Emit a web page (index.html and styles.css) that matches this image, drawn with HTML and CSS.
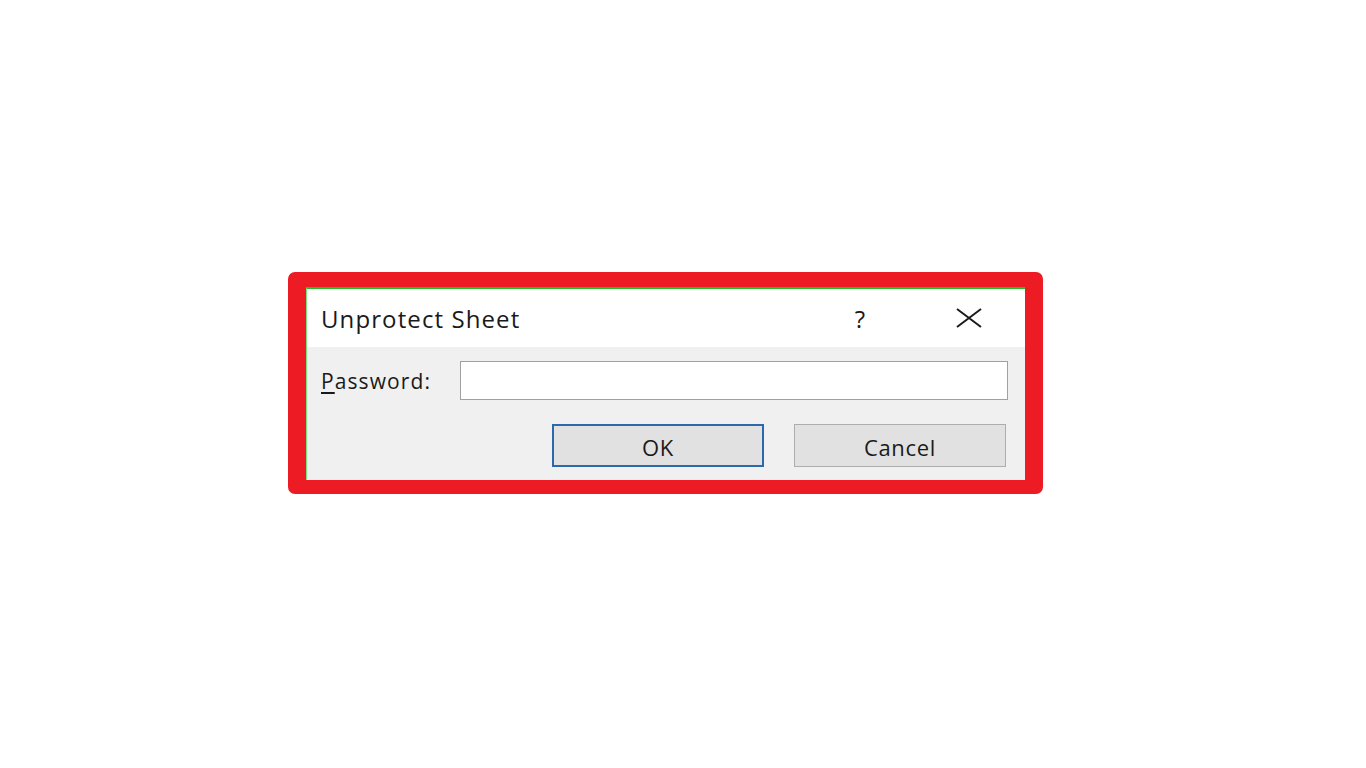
FILE: index.html
```html
<!DOCTYPE html>
<html lang="en">
<head>
  <meta charset="UTF-8" />
  <title>Unprotect Sheet</title>
  <link rel="stylesheet" href="styles.css">
</head>
<body>
  <div class="frame">
    <div class="dialog">
      <div class="title-bar">
        <span class="title">Unprotect Sheet</span>
        <span class="help">?</span>
        <span class="close">
          <svg width="26" height="20" viewBox="0 0 26 20" preserveAspectRatio="none">
            <path d="M1 1 L25 19 M25 1 L1 19" stroke="#1a1a1a" stroke-width="2" fill="none" />
          </svg>
        </span>
      </div>

      <div class="content">
        <div class="field-row">
          <label class="label" for="password"><u>P</u>assword:</label>
          <input class="input" type="password" id="password" />
        </div>
        <div class="button-row">
          <button class="btn btn-default">OK</button>
          <button class="btn">Cancel</button>
        </div>
      </div>
    </div>
  </div>
</body>
</html>
```

FILE: styles.css
```css
:root {
  --red: #ed1c24;
  --green: #22c02a;
  --panel: #f0f0f0;
  --text: #1a1a1a;
  --btn: #e1e1e1;
}

body {
  margin: 0;
  background: #ffffff;
  font-family: "Open Sans", "Noto Sans", sans-serif;
  color: var(--text);
}

.frame {
  width: 755px;
  margin: 272px 0 0 288px;
  box-sizing: border-box;
  border-style: solid;
  border-color: var(--red);
  border-width: 15px 18px 14px 18px;
  border-radius: 7px;
  background: var(--panel);
}

.dialog {
  border-top: 2px solid var(--green);
  border-left: 1px solid #7be07f;
}

.title-bar {
  display: flex;
  align-items: center;
  height: 58px;
  padding-left: 14px;
  background: #ffffff;
}

.title {
  flex: 1;
  font-size: 24px;
  letter-spacing: 1.1px;
}

.help {
  width: 40px;
  text-align: center;
  font-size: 24px;
  margin-right: 62px;
}

.close {
  display: flex;
  justify-content: center;
  width: 54px;
  margin-right: 29px;
}

.content {
  padding: 14px 17px 13px 14px;
}

.field-row {
  display: flex;
  align-items: center;
  height: 39px;
}

.label {
  width: 139px;
  font-size: 21px;
  letter-spacing: 1.1px;
}

.label u {
  text-underline-offset: 3px;
}

.input {
  flex: 1;
  height: 39px;
  box-sizing: border-box;
  border: 1px solid #a0a0a0;
  background: #ffffff;
  margin: 0;
}

.button-row {
  display: flex;
  justify-content: flex-end;
  gap: 30px;
  margin-top: 24px;
  padding-right: 2px;
}

.btn {
  width: 212px;
  height: 43px;
  box-sizing: border-box;
  border: 1px solid #adadad;
  background: var(--btn);
  font-family: "Open Sans", "Noto Sans", sans-serif;
  font-size: 22px;
  letter-spacing: 0.7px;
  color: var(--text);
  padding: 3px 0 0;
}

.btn-default {
  border: 2px solid #2b68ac;
}
```
